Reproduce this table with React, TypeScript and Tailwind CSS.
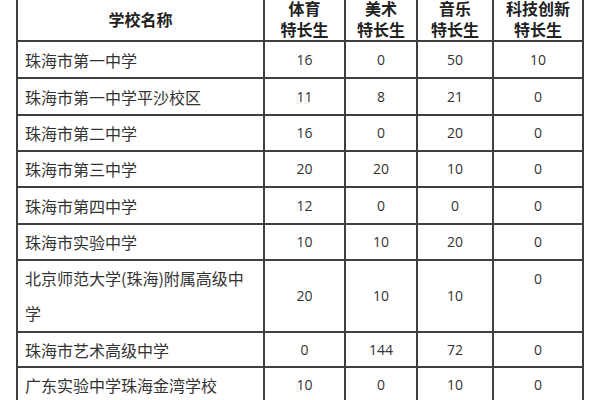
import React from "react";

const rows: { name: React.ReactNode; v: string[]; tall?: boolean }[] = [
  { name: "珠海市第一中学", v: ["16", "0", "50", "10"] },
  { name: "珠海市第一中学平沙校区", v: ["11", "8", "21", "0"] },
  { name: "珠海市第二中学", v: ["16", "0", "20", "0"] },
  { name: "珠海市第三中学", v: ["20", "20", "10", "0"] },
  { name: "珠海市第四中学", v: ["12", "0", "0", "0"] },
  { name: "珠海市实验中学", v: ["10", "10", "20", "0"] },
  {
    name: (
      <>
        北京师范大学(珠海)附属高级中
        <br />学
      </>
    ),
    v: ["20", "10", "10", "0"],
    tall: true,
  },
  { name: "珠海市艺术高级中学", v: ["0", "144", "72", "0"] },
  { name: "广东实验中学珠海金湾学校", v: ["10", "0", "10", "0"] },
];

const heads = [
  ["体育", "特长生"],
  ["美术", "特长生"],
  ["音乐", "特长生"],
  ["科技创新", "特长生"],
];

const cjk = "font-['Noto_Sans_CJK_SC',sans-serif]";
const num = "font-['Open_Sans','Noto_Sans_CJK_SC',sans-serif]";

export default function App() {
  return (
    <div className="w-[600px] h-[400px] overflow-hidden bg-white">
      <div className="ml-[16px] mt-[-4px] w-[568px] bg-[#404040] p-[2px] grid grid-cols-[245px_79px_70px_74px_88px] grid-rows-[42px_35px_35px_34px_34px_35px_34px_70px_33px_34px] gap-[2px]">
        <div className={`bg-white flex items-center justify-center text-[16px] font-bold text-[#222] ${cjk}`}>
          学校名称
        </div>
        {heads.map((h, i) => (
          <div
            key={i}
            className={`bg-white flex flex-col items-center justify-center text-[16px] leading-[21px] font-bold text-[#222] ${cjk}`}
          >
            <span>{h[0]}</span>
            <span>{h[1]}</span>
          </div>
        ))}
        {rows.map((r, ri) => (
          <React.Fragment key={ri}>
            <div
              className={`bg-white flex items-center pl-[7px] text-[16px] text-[#333] ${cjk} ${
                r.tall ? "leading-[35px]" : "leading-none"
              }`}
            >
              <span>{r.name}</span>
            </div>
            {r.v.map((v, vi) => (
              <div
                key={vi}
                className={`bg-white flex justify-center text-[14px] text-[#333] ${num} ${
                  r.tall && vi === 3 ? "items-start leading-[35px]" : "items-center leading-none"
                }`}
              >
                {v}
              </div>
            ))}
          </React.Fragment>
        ))}
      </div>
    </div>
  );
}
